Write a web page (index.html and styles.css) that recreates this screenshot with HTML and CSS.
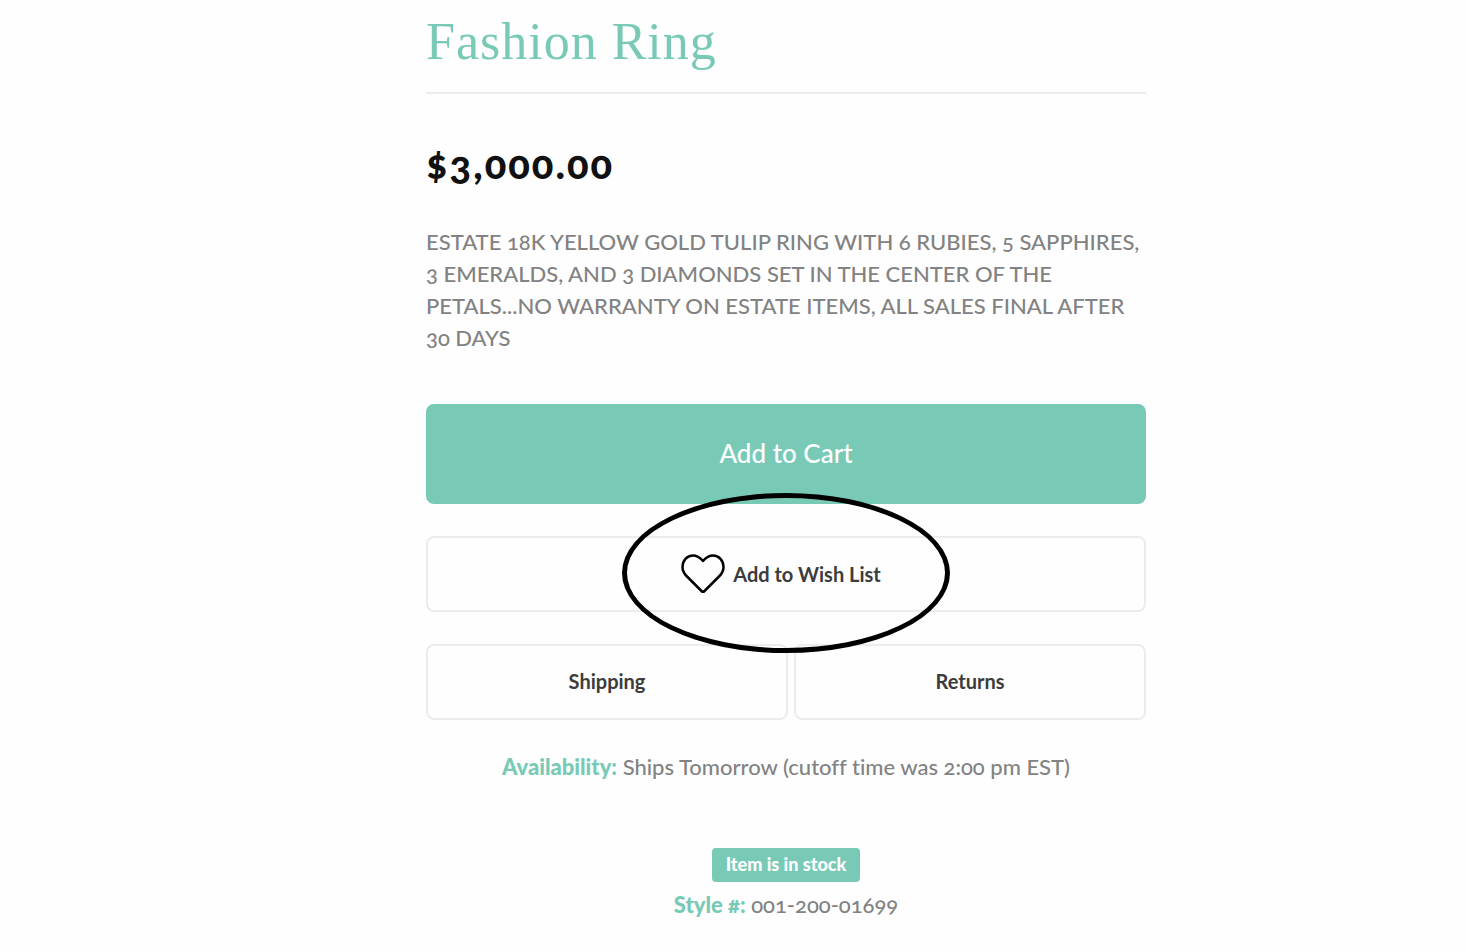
FILE: index.html
```html
<!DOCTYPE html>
<html lang="en">

<head>
    <meta charset="UTF-8">
    <meta name="viewport" content="width=device-width, initial-scale=1.0">
    <title>Fashion Ring</title>
    <link rel="stylesheet" href="styles.css">
</head>

<body>

    <main class="product">

        <h1>Fashion Ring</h1>

        <p class="price">$3,000.00</p>

        <p class="description">
            ESTATE 18K YELLOW GOLD TULIP RING WITH 6 RUBIES, 5 SAPPHIRES,
            3 EMERALDS, AND 3 DIAMONDS SET IN THE CENTER OF THE
            PETALS...NO WARRANTY ON ESTATE ITEMS, ALL SALES FINAL AFTER
            30 DAYS
        </p>

        <div class="actions">
            <button class="cart">Add to Cart</button>

            <div class="wish">
                <button class="outline">
                    <svg class="heart" viewBox="0 0 44 40" aria-hidden="true">
                        <path d="M22 7 C18 2.500 15 1.500 12 1.500 C6 1.500 1.500 6.500 1.500 13 C1.500 17 3 19.500 5.500 22 L20.500 37 Q22 38.500 23.500 37 L38.500 22 C41 19.500 42.500 17 42.500 13 C42.500 6.500 38 1.500 32 1.500 C29 1.500 26 2.500 22 7 Z" />
                    </svg>
                    Add to Wish List
                </button>
                <span class="circle"></span>
            </div>

            <div class="info">
                <button class="outline">Shipping</button>
                <button class="outline">Returns</button>
            </div>
        </div>

        <p class="meta availability"><strong>Availability:</strong> Ships Tomorrow (cutoff time was 2:00 pm EST)</p>

        <div class="stock">
            <span class="badge">Item is in stock</span>
            <p class="meta"><strong>Style #:</strong> 001-200-01699</p>
        </div>

    </main>

</body>

</html>
```

FILE: styles.css
```css
:root {
    --green: #78cab7;
    --line: #ececec;
    --grey: #828282;
}

* {
    box-sizing: border-box;
}

body {
    margin: 0;
    padding-left: 106px;
    background-color: #fefefe;
    color: var(--grey);
    font-family: Lato, "Liberation Sans", sans-serif;
    font-weight: 500;
    font-variant-numeric: oldstyle-nums;
    font-variant-ligatures: no-common-ligatures;
}

.product {
    max-width: 720px;
    margin: 0 auto;
}

h1 {
    margin: 0;
    padding: 10px 0 18px;
    border-bottom: 2px solid var(--line);
    color: var(--green);
    font-family: "Liberation Serif", serif;
    font-size: 52px;
    font-weight: normal;
    line-height: 64px;
    letter-spacing: 1px;
}

.price {
    margin: 46px 0 38px;
    color: #111;
    font-size: 40px;
    font-weight: 900;
    line-height: 48px;
    letter-spacing: 2px;
}

.description {
    margin: 0 0 50px;
    font-size: 22px;
    line-height: 32px;
}

.actions {
    display: flex;
    flex-direction: column;
    gap: 32px;
}

button {
    width: 100%;
    border-radius: 8px;
    font-family: inherit;
    font-variant: inherit;
    cursor: pointer;
}

.cart {
    height: 100px;
    padding: 0 0 2px;
    border: none;
    background-color: var(--green);
    color: #fff;
    font-size: 26px;
    font-weight: 500;
}

.outline {
    display: flex;
    align-items: center;
    justify-content: center;
    gap: 8px;
    height: 76px;
    padding: 0 0 2px;
    border: 2px solid var(--line);
    background-color: transparent;
    color: #3c3c3c;
    font-size: 20px;
    font-weight: bold;
}

.heart {
    width: 44px;
    height: 40px;
    fill: none;
    stroke: #000;
    stroke-width: 2.5;
    stroke-linejoin: round;
}

.wish {
    position: relative;
}

.wish .outline {
    padding: 0 10px 0 0;
}

/* ring around the wish list button */
.circle {
    position: absolute;
    top: -43px;
    left: 50%;
    width: 328px;
    height: 160px;
    border: 5px solid #000;
    border-radius: 50%;
    transform: translateX(-50%);
    pointer-events: none;
}

.info {
    display: grid;
    grid-template-columns: 362fr 352fr;
    gap: 6px;
}

.meta {
    margin: 0;
    font-size: 22px;
    line-height: 32px;
    text-align: center;
}

.meta strong {
    color: var(--green);
    font-weight: 900;
}

.availability {
    margin-top: 31px;
}

.stock {
    display: flex;
    flex-direction: column;
    align-items: center;
    gap: 7px;
    margin-top: 65px;
}

.badge {
    padding: 0 14px 2px;
    border-radius: 4px;
    background-color: var(--green);
    color: #fff;
    font-size: 18px;
    font-weight: 900;
    line-height: 32px;
}
```
